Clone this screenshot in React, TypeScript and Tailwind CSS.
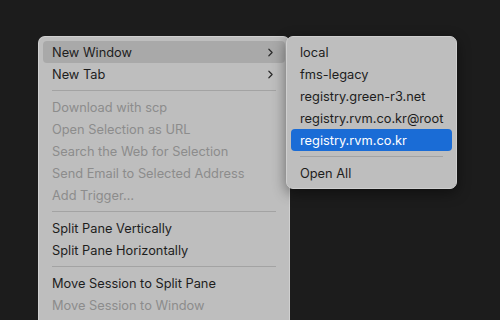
import { ChevronRight } from 'lucide-react'

type Item = { label: string; disabled?: boolean; submenu?: boolean; active?: boolean } | 'sep'

const mainItems: Item[] = [
  { label: 'New Window', submenu: true, active: true },
  { label: 'New Tab', submenu: true },
  'sep',
  { label: 'Download with scp', disabled: true },
  { label: 'Open Selection as URL', disabled: true },
  { label: 'Search the Web for Selection', disabled: true },
  { label: 'Send Email to Selected Address', disabled: true },
  { label: 'Add Trigger…', disabled: true },
  'sep',
  { label: 'Split Pane Vertically' },
  { label: 'Split Pane Horizontally' },
  'sep',
  { label: 'Move Session to Split Pane' },
  { label: 'Move Session to Window', disabled: true },
]

const profiles = ['local', 'fms-legacy', 'registry.green-r3.net', 'registry.rvm.co.kr@root']

function Separator() {
  return (
    <div className="h-[11px] flex items-center px-[9px]">
      <div className="h-px w-full bg-[#a3a3a3]" />
    </div>
  )
}

export default function App() {
  return (
    <div
      className="w-[500px] h-[320px] overflow-hidden bg-[#1c1c1c] flex items-start pl-[38px] pt-[36px] text-[12.8px] leading-[22px]"
      style={{ fontFamily: 'Inter, "Liberation Sans", sans-serif' }}
    >
      <div className="w-[252px] shrink-0 rounded-t-[7px] bg-[#bebebe] border border-[#d0d0d0] border-b-0 px-[4px] pt-[4px] pb-[20px]">
        {mainItems.map((item, i) =>
          item === 'sep' ? (
            <Separator key={i} />
          ) : (
            <div
              key={i}
              className={`h-[22px] flex items-center justify-between pl-[9px] pr-[8px] rounded-[4px] ${
                item.active ? 'bg-[#a9a9a9]' : ''
              } ${item.disabled ? 'text-[#8c8c8c]' : 'text-[#1d1d1d]'}`}
            >
              <span className="translate-y-[1px]">{item.label}</span>
              {item.submenu && <ChevronRight size={13} strokeWidth={2.2} className="text-[#2a2a2a]" />}
            </div>
          )
        )}
      </div>
      <div className="w-[171px] shrink-0 -ml-[4px] rounded-[7px] bg-[#bebebe] border border-[#cfcfcf] shadow-[0_4px_14px_rgba(0,0,0,0.45)] px-[4px] pt-[4px] pb-[4px] text-[#1d1d1d]">
        {profiles.map((p) => (
          <div key={p} className="h-[22px] flex items-center pl-[9px]">
            <span className="translate-y-[1px]">{p}</span>
          </div>
        ))}
        <div className="h-[22px] flex items-center pl-[9px] rounded-[4px] bg-[#1a6cd6] text-white">
          <span className="translate-y-[1px]">registry.rvm.co.kr</span>
        </div>
        <Separator />
        <div className="h-[22px] flex items-center pl-[9px]">
          <span className="translate-y-[1px]">Open All</span>
        </div>
      </div>
    </div>
  )
}
